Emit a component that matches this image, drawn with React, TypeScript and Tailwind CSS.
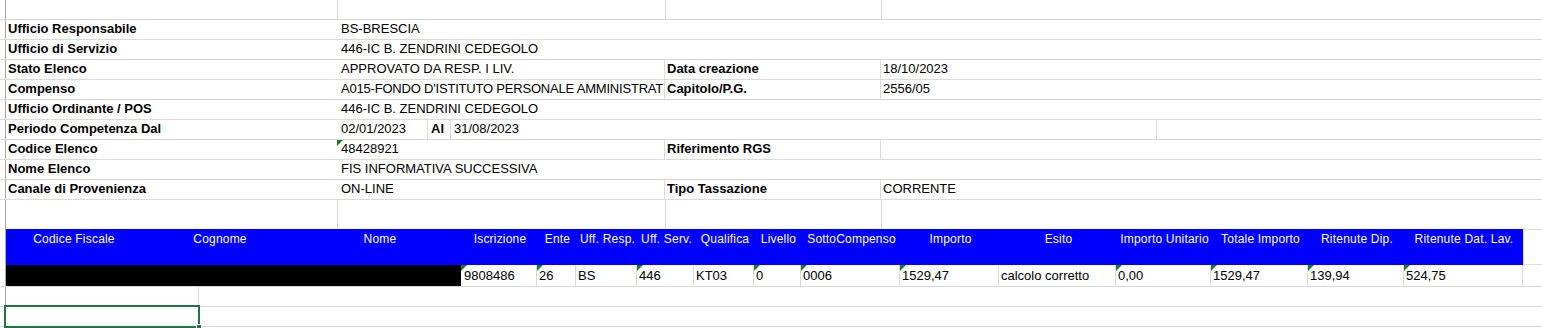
import type { ReactNode } from 'react';

const grid = 'border-[#dadada]';

type CellProps = {
    w?: string;
    children?: ReactNode;
    bold?: boolean;
    line?: boolean;
    flag?: boolean;
    pad?: string;
    lift?: string;
    extra?: string;
};

function Cell({ w = 'flex-1', children, bold, line = true, flag, pad = 'pl-[2px]', lift = 'pb-[3px]', extra = '' }: CellProps) {
    return (
        <div
            className={`relative flex h-full items-center overflow-hidden whitespace-nowrap ${pad} ${w} ${line ? `border-r ${grid}` : ''} ${bold ? 'font-bold' : ''} ${extra}`}
        >
            {flag && (
                <span className="absolute top-0 left-0 h-0 w-0 border-t-[6px] border-r-[6px] border-t-[#168016] border-r-transparent" />
            )}
            <span className={lift}>{children}</span>
        </div>
    );
}

function Row({ h = 'h-5', children }: { h?: string; children?: ReactNode }) {
    return (
        <div className={`flex ${h} border-b ${grid}`}>
            <div className="h-full w-[6px] shrink-0 border-r border-[#ababab]" />
            {children}
        </div>
    );
}

function InfoRow({ label, value, label2, value2, tight }: { label: string; value: string; label2?: string; value2?: string; tight?: boolean }) {
    if (label2 === undefined) {
        return (
            <Row>
                <Cell w="w-[331px]" bold line={false}>{label}</Cell>
                <Cell pad="pl-[4px]" line={false}>{value}</Cell>
            </Row>
        );
    }
    return (
        <Row>
            <Cell w="w-[331px]" bold line={false}>{label}</Cell>
            <Cell w="w-[328px]" pad="pl-[4px]" flag={label === 'Codice Elenco'} extra={tight ? 'tracking-[-0.2px]' : ''}>
                {value}
            </Cell>
            <Cell w="w-[216px]" bold>{label2}</Cell>
            <Cell line={false}>{value2}</Cell>
        </Row>
    );
}

const columns = [
    { name: 'Codice Fiscale', w: 'w-[136px]' },
    { name: 'Cognome', w: 'w-[156px]' },
    { name: 'Nome', w: 'w-[164px]' },
    { name: 'Iscrizione', w: 'w-[76px]' },
    { name: 'Ente', w: 'w-[39px]' },
    { name: 'Uff. Resp.', w: 'w-[61px]' },
    { name: 'Uff. Serv.', w: 'w-[57px]' },
    { name: 'Qualifica', w: 'w-[60px]' },
    { name: 'Livello', w: 'w-[47px]' },
    { name: 'SottoCompenso', w: 'w-[99px]' },
    { name: 'Importo', w: 'w-[99px]' },
    { name: 'Esito', w: 'w-[117px]' },
    { name: 'Importo Unitario', w: 'w-[95px]' },
    { name: 'Totale Importo', w: 'w-[97px]' },
    { name: 'Ritenute Dip.', w: 'w-[96px]' },
    { name: 'Ritenute Dat. Lav.', w: 'w-[119px]' },
];

const values = [
    { v: '9808486', flag: true },
    { v: '26', flag: true },
    { v: 'BS', flag: false },
    { v: '446', flag: true },
    { v: 'KT03', flag: false },
    { v: '0', flag: true },
    { v: '0006', flag: true },
    { v: '1529,47', flag: true },
    { v: 'calcolo corretto', flag: false },
    { v: '0,00', flag: true },
    { v: '1529,47', flag: true },
    { v: '139,94', flag: true },
    { v: '524,75', flag: true },
];

export default function App() {
    return (
        <main className="h-[328px] w-[1542px] overflow-hidden bg-white text-[13px] leading-[15px] text-black [font-family:'Liberation_Sans',Arial,sans-serif]">
            <Row h="h-5">
                <Cell w="w-[332px]" />
                <Cell w="w-[328px]" />
                <Cell w="w-[216px]" />
                <Cell line={false} />
            </Row>
            <InfoRow label="Ufficio Responsabile" value="BS-BRESCIA" />
            <InfoRow label="Ufficio di Servizio" value="446-IC B. ZENDRINI CEDEGOLO" />
            <InfoRow label="Stato Elenco" value="APPROVATO DA RESP. I LIV." label2="Data creazione" value2="18/10/2023" />
            <InfoRow label="Compenso" value="A015-FONDO D'ISTITUTO PERSONALE AMMINISTRAT" label2="Capitolo/P.G." value2="2556/05" tight />
            <InfoRow label="Ufficio Ordinante / POS" value="446-IC B. ZENDRINI CEDEGOLO" />
            <Row>
                <Cell w="w-[331px]" bold line={false}>Periodo Competenza Dal</Cell>
                <Cell w="w-[91px]" pad="pl-[4px]">02/01/2023</Cell>
                <Cell w="w-[23px]" pad="pl-[3px]" bold>Al</Cell>
                <Cell w="w-[706px]" pad="pl-[3px]">31/08/2023</Cell>
                <Cell line={false} />
            </Row>
            <InfoRow label="Codice Elenco" value="48428921" label2="Riferimento RGS" value2="" />
            <InfoRow label="Nome Elenco" value="FIS INFORMATIVA SUCCESSIVA" />
            <InfoRow label="Canale di Provenienza" value="ON-LINE" label2="Tipo Tassazione" value2="CORRENTE" />
            <div className="flex h-[29px]">
                <div className="h-full w-[6px] shrink-0 border-r border-[#ababab]" />
                <Cell w="w-[332px]" />
                <Cell w="w-[328px]" />
                <Cell w="w-[216px]" />
                <Cell line={false} />
            </div>

            <div className="flex h-[36px]">
                <div className="h-full w-[6px] shrink-0 border-r border-[#ababab]" />
                <div className="flex h-full bg-[#0000ff] text-[12px] leading-[14px] tracking-[0.2px] text-white">
                    {columns.map((c, i) => (
                        <div
                            key={c.name}
                            className={`${c.w} h-full pt-[3px] text-center whitespace-nowrap ${i === columns.length - 1 ? `border-r ${grid}` : ''}`}
                        >
                            {c.name}
                        </div>
                    ))}
                </div>
                <div className={`h-full flex-1 border-y ${grid}`} />
            </div>

            <Row h="h-[22px]">
                <div className="h-full w-[455px] shrink-0 bg-black" />
                {values.map((d, i) => (
                    <Cell key={i} w={columns[i + 3].w} flag={d.flag} lift="pb-px" pad={i === 0 ? 'pl-[3px]' : 'pl-[2px]'}>
                        {d.v}
                    </Cell>
                ))}
                <Cell line={false} />
            </Row>
            <Row>
                <Cell w="w-[193px]" />
                <Cell line={false} />
            </Row>
            <div className="relative">
                <Row>
                    <Cell line={false} />
                </Row>
                <div className="absolute top-[-2px] left-[4px] h-[23px] w-[196px] border-2 border-[#217346]">
                    <span className="absolute right-[-4px] bottom-[-4px] h-[6px] w-[6px] border border-white bg-[#217346]" />
                </div>
            </div>
            <Row />
        </main>
    );
}
